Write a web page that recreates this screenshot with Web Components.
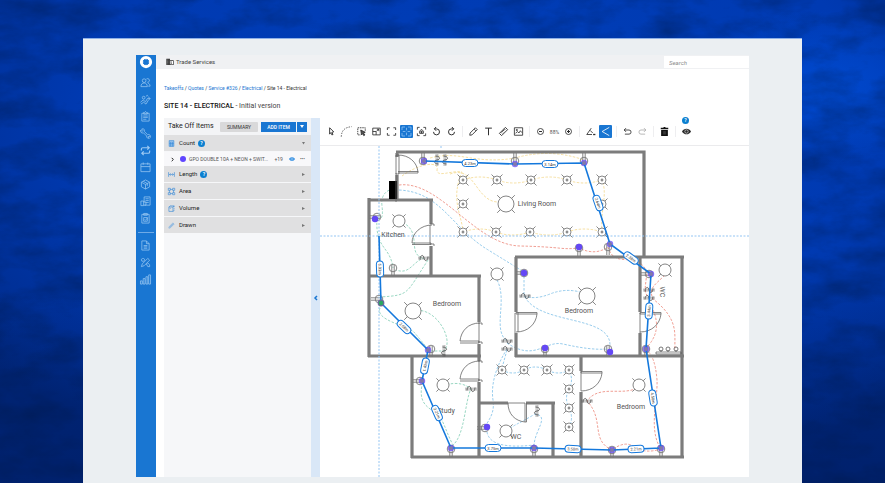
<!DOCTYPE html>
<html lang="en">
<head>
<meta charset="utf-8">
<title>Site 14 - Electrical</title>
<style>
body{margin:0;font-family:Roboto,"Liberation Sans",sans-serif;font-size:6px;line-height:8px;color:#333}
</style>
</head>
<body>
<page-backdrop>
  <app-shell>
    <side-nav slot="nav"></side-nav>
    <top-bar slot="top">Trade Services</top-bar>
    <page-heading slot="heading"></page-heading>
    <takeoff-panel slot="panel">
      <group-row icon="count" help open>Count</group-row>
      <item-row>GPO DOUBLE 10A + NEON + SWIT...</item-row>
      <group-row icon="length" help>Length</group-row>
      <group-row icon="area">Area</group-row>
      <group-row icon="volume">Volume</group-row>
      <group-row icon="drawn">Drawn</group-row>
    </takeoff-panel>
    <draw-toolbar slot="canvas"></draw-toolbar>
    <floor-plan slot="canvas"></floor-plan>
  </app-shell>
</page-backdrop>
<script>
const ICONS={
 logo:'<circle cx="12" cy="12" r="8" fill="none" stroke="#fff" stroke-width="5"/><path d="M12 4.500v3M12 16.500v3M4.500 12h3M16.500 12h3M7 7l1.500 1.500M17 17l-1.500-1.500M7 17l1.500-1.500M17 7l-1.500 1.500" stroke="#fff" stroke-width="2"/>',
 people:'<circle cx="9" cy="8" r="4"/><path d="M2 21c0-5 3-8 7-8s7 3 7 8zM14 4.500a4 4 0 1 1 2 7M17 13c3 1 5 4 5 7h-4"/>',
 trend:'<circle cx="8" cy="8" r="3"/><path d="M1 18l6-5 5 4 4-7 6 0M18 6l4 4-4 4M2 22l6-4 5 4 5-8M13 5l3-2 2 2"/>',
 clip:'<path d="M4 5h16v17H4zM8 5V3h2l2-2 2 2h2v4H8zM7 11h10M7 14h10M7 18h7"/>',
 wrench:'<path d="M9.500 3.500a4.500 4.500 0 0 0-6-1l3 3-2 2-3-3a4.500 4.500 0 0 0 6 6l7 7a4.500 4.500 0 0 0 6 5l-3-3 2-2 3 3a4.500 4.500 0 0 0-6-6l-7-7a4.500 4.500 0 0 0 0-4z"/>',
 loop:'<path d="M3 12V9a3 3 0 0 1 3-3h13M16 2l4 4-4 4M21 12v3a3 3 0 0 1-3 3H5M8 14l-4 4 4 4" stroke-width="2.600"/>',
 calendar:'<path d="M2 4h20v17H2zM2 10h20M7 1v5M17 1v5"/>',
 cube:'<path d="M12 2l9 5v10l-9 5-9-5V7zM3 7l9 5 9-5M12 12v10M7 5l9 5v5"/>',
 receipt:'<path d="M9 14V2h13v18H10M12 6h7M12 10h7M12 14h7M2 11h6v10H2zM8 13l5 0v7H8"/>',
 clip2:'<path d="M4 3h16v19H4zM8 1h8v4H8zM8 10h8v8H8zM10 14l2 2 5-6"/>',
 doc:'<path d="M4 2h10l6 6v14H4zM14 2v6h6M8 12h8M8 15h8M8 18h8"/>',
 pens:'<path d="M3 21l2-6L17 3l4 4L9 19zM3 5c3-3 7-2 7 1s-3 4-6 3zM14 15l3-2 4 4v4h-4z"/>',
 bars:'<path d="M1 15h4v7H1zM7 10h4v12H7zM13 6h4v16h-4zM19 2h4v20h-4z"/>',
 building:'<path d="M1 2h11v5h11v14H1z" fill="#333" stroke="none"/><path d="M4 6h2M8 6h2M4 10h2M8 10h2M4 14h2M8 14h2M4 18h2M8 18h2" stroke="#ddd" stroke-width="1.500"/><path d="M13 9h8v10h-8z" fill="#fff" stroke="none"/><path d="M15 12h3M15 16h3" stroke="#333"/>',
 count:'<path d="M4 2h16v20H4z" fill="#b7d7f5"/><path d="M4 7h16M4 12h16M4 17h16M9 7v15M15 7v15"/>',
 length:'<path d="M2 4v16M22 4v16M5 12h14M9 8l-4 4 4 4M15 8l4 4-4 4"/>',
 area:'<path d="M5 5h14v14H5z"/><path d="M1 1h7v7H1zM16 1h7v7h-7zM1 16h7v7H1zM16 16h7v7h-7z" fill="#e0e0e1"/>',
 volume:'<path d="M3 7h14v15H3zM3 7l4-4h14l-4 4M21 3v4M21 10v3M21 16v3l-4 3M6 12h3"/>',
 drawn:'<path d="M3 21l1-5L17 3l4 4L8 20zM7 17L17 7" stroke="#5c9fe0"/>',
 cursor:'<path d="M7 2l11 11-5 1 3 6-3 1-3-6-3 4z" stroke-width="2.400"/>',
 curve:'<path d="M-2 26C-1 8 8 1 26-1" stroke-width="1.800" stroke-dasharray="4 3"/>',
 pick:'<path d="M22 10V2H2v19h8" stroke-dasharray="4 2"/><path d="M10 8l12 6-5 2 4 5-3 2-3-5-3 3z" fill="#555"/>',
 scale:'<path d="M2 3h20v18H2zM2 12h9v9M12 11l6-5M13 6h5v5"/>',
 full:'<path d="M1 8V2h6M17 2h6v6M23 16v6h-6M7 22H1v-6"/>',
 grid:'<path d="M0 8V0h8M16 0h8v8M24 16v8h-8M8 24H0v-8M12 2v7M12 15v7M2 12h7M15 12h7" stroke="#a3d0fb" stroke-width="1.800"/>',
 focus:'<path d="M1 7V1h6M17 1h6v6M23 17v6h-6M7 23H1v-6"/><path d="M7 17v-6l5-5 5 5v6z"/><circle cx="12" cy="13" r="2" fill="#333"/>',
 ccw:'<path d="M4 13a8 8 0 1 0 8-8H7M11 0L6 5l5 5" stroke-width="2.600"/>',
 cw:'<path d="M20 13a8 8 0 1 1-8-8h5M13 0l5 5-5 5" stroke-width="2.600"/>',
 pencil:'<path d="M2 22l1-6L17 2l5 5L8 21zM14 6l4 4" stroke-width="2.300"/>',
 text:'<path d="M3 3h18M12 3v19" stroke-width="2.600"/>',
 ruler:'<path d="M1 17L17 1l6 6L7 23zM14 5l3 3M11 8l3 3M8 11l3 3M5 14l3 3" stroke-width="2.400"/>',
 image:'<path d="M1 2h22v20H1zM4 17l5-5 4 4 4-6 4 5M6 7h3v2H6z"/>',
 minus:'<circle cx="12" cy="12" r="8"/><path d="M8 12h8" stroke-width="2.800"/>',
 plus:'<circle cx="12" cy="12" r="8"/><path d="M8 12h8M12 8v8" stroke-width="2.800"/>',
 angle:'<path d="M14 3L2 20h14M11 9l7 7"/><path d="M19 20h6" stroke-width="3.500"/>',
 share:'<path d="M22 1L3 12l19 11" stroke="#fff"/>',
 undo:'<path d="M8 3L3 8l5 5M3 8h13a5.500 5.500 0 0 1 0 11H5" stroke-width="2.200"/>',
 redo:'<path d="M16 3l5 5-5 5M21 8H8a5.500 5.500 0 0 0 0 11h11" stroke="#aaa" stroke-width="2.200"/>',
 trash:'<path d="M2 2h7l1-2h4l1 2h7v4H2zM3 8h18v16H3z" fill="#111" stroke="none"/><path d="M9 11v9M12 11v9M15 11v9" stroke="#777" stroke-width="1"/>',
 eye:'<path d="M0 12c5-10 19-10 24 0-5 10-19 10-24 0z" fill="currentColor" stroke="none"/><circle cx="12" cy="12" r="4.500" fill="none" stroke="#fff" stroke-width="1.500"/>'
};
const svg=(n,w=2)=>`<svg viewBox="0 0 24 24" fill="none" stroke="currentColor" stroke-width="${w}" aria-hidden="true">${ICONS[n]}</svg>`;
const BTN='button{font:inherit;color:inherit;border:0;padding:0;margin:0;background:none;cursor:pointer}svg{display:block;flex:none;overflow:visible}';
const define=(name,render)=>customElements.define(name,class extends HTMLElement{
  constructor(){super();this.attachShadow({mode:'open'})}
  connectedCallback(){this.shadowRoot.innerHTML=render(this)}
});

define('page-backdrop',()=>`<style>
:host{display:grid;min-height:100vh;background:#0038ae}
.wall,.sheet{grid-area:1/1}
.wall{display:block;width:100%;height:100%;min-height:0;contain:size}
.sheet{margin:38px 83px 0;padding:16px 53px 6px;background:#ebeff2;border-top:1px solid #8fb0e6}
</style>
<svg class="wall" preserveAspectRatio="none" viewBox="0 0 885 483" aria-hidden="true">
<defs><radialGradient id="g" cx=".55" cy=".25" r=".75"><stop offset="0" stop-color="#003eb8"/><stop offset=".6" stop-color="#003ab2"/><stop offset=".85" stop-color="#003098"/><stop offset="1" stop-color="#00267a"/></radialGradient>
<radialGradient id="h" cx=".93" cy=".18" r=".16"><stop offset="0" stop-color="#0050dc" stop-opacity=".7"/><stop offset="1" stop-color="#0050dc" stop-opacity="0"/></radialGradient>
<linearGradient id="f" x1="0" y1="0" x2="0" y2="1"><stop offset=".6" stop-color="#001a5c" stop-opacity="0"/><stop offset="1" stop-color="#001a5c" stop-opacity=".45"/></linearGradient>
<filter id="n" x="0" y="0" width="1" height="1" color-interpolation-filters="sRGB"><feTurbulence type="fractalNoise" baseFrequency=".02 .04" numOctaves="6" seed="8"/><feColorMatrix values="0 0 0 0 0  0 0 0 0 .09  0 0 0 0 .27  .8 0 0 0 -.28"/></filter></defs>
<rect width="885" height="483" fill="url(#g)"/><rect width="885" height="483" fill="url(#h)"/><rect width="885" height="483" fill="url(#f)"/><rect width="885" height="483" filter="url(#n)"/></svg>
<div class="sheet"><slot></slot></div>`);

define('app-shell',()=>`<style>
:host{display:flex;background:#fff}
.main{flex:1;min-width:0;display:flex;flex-direction:column}
.work{display:flex;flex:1;padding-left:8px}
.canvas{flex:1;min-width:0}
${BTN}
.split{width:9px;display:flex;align-items:center;justify-content:center;background:#d9e7f7;color:#1976d2}
.split svg{width:6px;height:6px}
</style><slot name="nav"></slot><div class="main"><slot name="top"></slot><slot name="heading"></slot>
<div class="work"><slot name="panel"></slot><button class="split" aria-label="Collapse panel"><svg viewBox="0 0 6 6" fill="none" stroke="currentColor" stroke-width="1.500"><path d="M4 1L2 3l2 2"/></svg></button>
<div class="canvas"><slot name="canvas"></slot></div></div></div>`);

define('side-nav',()=>`<style>
:host{display:block;width:20px;background:#1976d2;color:#9cc9f3}
nav{display:flex;flex-direction:column;align-items:center}
${BTN}
a{display:flex;align-items:center;justify-content:center;width:20px;height:17px;color:inherit;padding-right:2px;box-sizing:border-box}
a svg{width:11px;height:11px}
.logo{height:14px;margin-bottom:5px;padding:0}.logo svg{width:14px;height:14px}
hr{width:16px;border:0;border-top:1px solid #6faae6;margin:5px 0 4px}
</style><nav aria-label="Main"><a href="#" class="logo" aria-label="Home">${svg('logo')}</a>
${['people','trend','clip','wrench','loop','calendar','cube','receipt','clip2'].map(n=>`<a href="#" aria-label="${n}">${svg(n,1.6)}</a>`).join('')}<hr>
${['doc','pens','bars'].map(n=>`<a href="#" aria-label="${n}">${svg(n,1.6)}</a>`).join('')}</nav>`);

define('top-bar',()=>`<style>
:host{display:flex;align-items:center;height:14px;background:#f0f1f3;padding-left:10px;gap:2px;color:#444}
svg{width:8px;height:8px}
input{margin-left:auto;width:85px;height:12px;box-sizing:border-box;border:0;padding:0 5px;font:italic 6px Roboto,sans-serif;background:#fff;outline:0}
input::placeholder{color:#8a8a8a;opacity:1}
</style>${svg('building')}<span><slot></slot></span><input type="search" placeholder="Search" aria-label="Search">`);

define('page-heading',()=>`<style>
:host{display:block;padding:15px 8px 7px}
nav{font-size:5px;line-height:8px;color:#333}
a{color:#1976d2;text-decoration:none}
h1{font-size:7px;line-height:10px;margin:9px 0 0;font-weight:400;color:#444}
b{font-weight:500;color:#111}
</style><nav aria-label="Breadcrumb"><a href="#">Takeoffs</a> / <a href="#">Quotes</a> / <a href="#">Service #326</a> / <a href="#">Electrical</a> / <span>Site 14 - Electrical</span></nav>
<h1><b>SITE 14 - ELECTRICAL</b> - Initial version</h1>`);

define('help-badge',()=>`<style>:host{display:inline-flex}button{all:unset;width:7px;height:7px;border-radius:4px;background:#0b7fd0;color:#fff;font-size:5px;line-height:7px;font-weight:700;text-align:center}</style><button aria-label="Help">?</button>`);

define('takeoff-panel',()=>`<style>
:host{display:block;width:147px;background:#f6f7f9}
${BTN}
header{display:flex;align-items:center;height:17px;padding:0 4px;background:#f3f4f6}
h2{font-size:7px;font-weight:400;margin:0 auto 0 0;color:#222;line-height:9px}
button{height:10px;font-size:5px;line-height:10px}
.s{width:38px;background:#d9d9da;margin-right:3px;border-radius:1px}
.a{width:35px;background:#1976d2;color:#fff;font-weight:500}
.d{width:10px;background:#1976d2;color:#fff;margin-left:1px;display:flex;align-items:center;justify-content:center}
.d svg{width:4px;height:3px}
</style><header><h2>Take Off Items</h2><button class="s">SUMMARY</button><button class="a">ADD ITEM</button><button class="d" aria-label="More ways to add"><svg viewBox="0 0 4 3"><path d="M0 0h4L2 3z" fill="#fff"/></svg></button></header><slot></slot>`);

define('group-row',e=>`<style>
:host{display:block;margin-bottom:1px}
${BTN}
div{display:flex;align-items:center;gap:3px;height:16px;padding:0 6px 0 4px;background:#e0e0e1;color:#222}
.g{display:flex;align-items:center;gap:4px}
.g svg{width:7px;height:7px;color:#2d83d6}
.t{margin-left:auto;color:#777}.t svg{width:3px;height:3px}
</style><div><button class="g" aria-expanded="${e.hasAttribute('open')}">${svg(e.getAttribute('icon'))}<span><slot></slot></span></button>${e.hasAttribute('help')?'<help-badge></help-badge>':''}<button class="t" aria-label="Toggle"><svg viewBox="0 0 3 3"><path d="${e.hasAttribute('open')?'M0 0h3L1.500 2.500z':'M0 0l3 1.500L0 3z'}" fill="currentColor"/></svg></button></div>`);

define('item-row',()=>`<style>
:host{display:flex;align-items:center;height:14px;padding:0 6px;color:#555;font-size:5px;background:#f8f8fa}
${BTN}
.c{width:4px;color:#222}.c svg{width:5px;height:5px}
i{width:6px;height:6px;border-radius:3px;background:#5f45ff;margin:0 3px 0 6px}
.n{margin-left:auto;margin-right:6px}
.e{color:#2d8be0;margin-right:5px}.e svg{width:6px;height:6px}
</style><button class="c" aria-label="Expand"><svg viewBox="0 0 6 6" fill="none" stroke="currentColor" stroke-width="1.200"><path d="M2 1l2 2-2 2"/></svg></button><i></i><span><slot></slot></span><span class="n">+19</span><button class="e" aria-label="Show">${svg('eye')}</button><button aria-label="More">•••</button>`);

define('tool-button',e=>`<style>
:host{display:flex;position:relative;width:15px;height:14px;align-items:center;justify-content:center;color:#2b2b2b}
${BTN}
button{display:flex;width:13px;height:13px;align-items:center;justify-content:center;border-radius:1px}
button.on{background:#1976d2}
svg{width:9px;height:9px}
help-badge{position:absolute;left:3px;top:-8px}
</style><button aria-label="${e.getAttribute('icon')}" class="${e.hasAttribute('on')?'on':''}">${svg(e.getAttribute('icon'),2.2)}</button>${e.hasAttribute('help')?'<help-badge></help-badge>':''}`);

const tb=(...a)=>a.map(n=>`<tool-button icon="${n}" ${n==='grid'||n==='share'?'on':''} ${n==='eye'?'help':''}></tool-button>`).join('');
define('draw-toolbar',()=>`<style>
:host{display:flex;align-items:center;height:27px;padding-left:4px;border-bottom:1px solid #ebebed}
u{width:1px;height:11px;margin:0 3px;background:#eeeef0}
span{width:13px;font-size:5px;color:#555;text-align:center}
</style>${tb('cursor','curve','pick','scale','full','grid','focus','ccw','cw')}<u></u>${tb('pencil','text','ruler','image')}<u></u>${tb('minus')}<span>88%</span>${tb('plus')}<u></u>${tb('angle','share')}<u></u>${tb('undo','redo')}<u></u>${tb('trash')}<u></u>${tb('eye')}`);

/* Plan geometry: one unit is one drawing unit of the sheet. */
const walls='M396 152H644V257 M397 153V157 M397 175V199 M369 198V357 M368 200H433 M431 200V224 M431 246V276 M368 276H481 M479 276V322 M479 344V361 M479 382V457 M368 356H481 M412 356V458 M411 457H684 M682 458V257 M515 257H684 M516 257V312 M516 333V357 M515 356H684 M640 257V312 M640 333V356 M581 356V371 M581 392V457 M479 403H508 M526 403H555 M553 403V457';
const down=[[463,180],[497,180],[531,180],[567,180],[602,180],[463,204],[602,204],[463,232],[496,232],[530,232],[567,232],[602,232],[502,370],[524,370],[547,370],[569,370],[569,389],[569,408],[569,427]];
const lamps=[[506,204,8],[399,221,6],[413,311,8],[587,296,8],[639,385,6],[665,270,6],[443,385,6],[506,431,6],[497,274,6]];
const outlets=[[423,161,180],[515,161,180],[584,161,180],[377,217,90],[393,268,0],[379,299,90],[431,349,0],[420,381,90],[451,449,0],[534,449,0],[612,450,0],[661,449,0],[646,349,0],[649,274,90],[608,247,0],[579,248,0],[524,273,90],[545,349,0],[608,349,0],[485,428,90]];
const dots=[[424,161],[515,164],[584,163],[375,219],[428,350],[422,381],[451,448],[534,448],[612,450],[661,448],[646,349],[651,274],[610,244],[579,247],[524,273],[545,348],[610,352],[487,427]];
const nodes=new Set(['424,161','515,164','584,163','428,350','422,381','451,448','534,448','612,450','661,448','646,349','651,274','610,244']);
const sw=[[437,160,90],[445,160,90],[424,258,0],[444,351,90],[471,389,0],[507,341,0],[507,349,0],[525,296,0],[649,290,0],[649,298,0],[587,401,0],[537,411,90]];
const pills=[[470,163,0,'4.23m'],[550,164,0,'3.14m'],[598,203,71,'2.64m'],[631,258,36,'2.38m'],[649,311,-86,'3.44m'],[653,398,81,'4.58m'],[636,449,-2,'2.21m'],[573,449,2,'3.58m'],[493,448,0,'3.75m'],[437,413,66,'3.21m'],[425,366,-79,'1.43m'],[404,327,44,'2.08m'],[380,269,88,'5.03m']];
const wires={
'#f5dc98':'M402 176C418 164 440 160 437 170C437 178 452 170 462 172C450 200 462 215 463 232Q480 226 496 232T530 232Q550 238 567 232T602 232M450 174C475 165 475 200 497 202M463 180Q480 174 497 180T531 180Q550 174 567 180T602 180C608 195 600 210 602 232M430 158C460 150 475 165 515 158Q550 148 584 160',
'#ee9488':'M399 185C440 180 475 245 520 246S560 250 579 248Q595 256 608 247C615 270 635 250 646 270C648 280 642 290 648 297M665 275C655 285 648 288 653 299C680 320 674 335 675 350M653 310Q662 330 648 346M640 386C625 398 600 383 587 401C605 420 590 440 612 450Q625 440 635 447T661 449C648 430 658 400 657 380Q655 355 646 350',
'#8cc6ea':'M399 190C440 192 450 225 485 248T524 272V296Q535 300 550 294T580 292M525 297C540 325 610 315 610 345M507 343C535 362 545 340 563 344S595 350 608 349M497 280C508 300 492 330 507 341M507 349C500 360 490 380 493 400S480 425 487 432Q490 450 534 445C535 430 550 416 535 414Q525 420 519 423T506 431M502 370Q513 376 524 370T547 370T569 370Q574 380 569 389Q564 398 569 408T569 427M507 350L502 368',
'#8fd2bc':'M397 188Q380 190 382 206T377 218C375 250 390 245 393 268M399 221C425 230 405 255 424 258C412 262 410 275 396 270M428 260C405 295 410 295 380 297M380 308C375 320 405 325 414 332T428 349M413 311C435 305 455 340 444 351H430M443 386C458 380 468 386 471 389C465 400 465 435 453 445C445 430 444 420 437 414S418 405 422 385'};
define('floor-plan',()=>`<style>
:host{display:block}svg{display:block;width:100%;height:auto}
text{font-family:Roboto,sans-serif;text-anchor:middle}
.r{font-size:7px;fill:#555}.p{font-size:4px;fill:#333}
</style><svg viewBox="320 146 429 331" role="img" aria-label="Electrical floor plan" fill="none">
<defs><g id="dn" stroke="#6a6a6a" stroke-width=".8"><path d="M-5.500-5.500l2.800 2.800M5.500-5.500l-2.800 2.800M-5.500 5.500l2.800-2.800M5.500 5.500l-2.800-2.800"/><circle r="4" fill="#fff"/><path d="M-.8-1h1.600v2h-1.600z" fill="#888" stroke="#888"/></g>
<g id="out" stroke="#777" stroke-width=".9"><circle r="3.800"/><path d="M-1.200-3V8M1.200-3V8"/></g>
<g id="sw" stroke="#555"><path d="M-6-.8h12M-6 .9H6" stroke-width=".5"/><path d="M-4 1.500C-4-3-.5-4 0 0S4 3 4-1.500" stroke-width=".9"/></g></defs>
${Object.entries(wires).map(([c,d])=>`<path d="${d}" stroke="${c}" stroke-width=".9" stroke-dasharray="2.500 1.500"/>`).join('')}
<path d="${walls}" stroke="#7c7c7c" stroke-width="3.200"/>
<path d="M389 181h8v18h-8z" fill="#000"/>
<g stroke="#666" stroke-width=".8"><path d="M396 155h3v19h-3zM398 173h20v-1.500h-20M398 155c11 0 19 7 20 17M396 173v29"/>
<path d="M432 225c-11 0-20 8-20 18h19v1.500h-19M430 224h4v2M430 244h4v2M430 225v19"/>
<path d="M480 323c-12 0-19 8-20 18h19v2h-19M478 323h4v2M478 342h4v2M479 323v20"/>
<path d="M480 361c-12 0-19 8-20 18h19v2h-19M478 361h4v2M478 380h4v2M479 361v20"/>
<path d="M516 332c12 0 20-8 21-18h-21v-1.500h21v1.500M515 313v20M518 312v20"/>
<path d="M640 332c12 0 20-8 21-18h-21v-1.500h21v1.500M640 313v20"/>
<path d="M581 391c12 0 20-8 21-18h-21v-1.500h21v1.500M581 371v20"/>
<path d="M508 403c0 11 7 18 17 19v-19h-17M525 422h1.500v-19"/></g>
<path d="M656 354h25v-2h-25zM661 352v-2M668 352v-2M676 352v-2" stroke="#555" stroke-width=".7"/><g stroke="#555" stroke-width=".8"><circle cx="661" cy="349" r="2"/><circle cx="668" cy="349" r="2"/><circle cx="676" cy="349" r="2"/></g>
${down.map(([x,y])=>`<use href="#dn" x="${x}" y="${y}"/>`).join('')}
${lamps.map(([x,y,r])=>{const a=r*.7,b=r*1.1;return `<g transform="translate(${x} ${y})" stroke="#666" stroke-width=".8"><circle r="${r}" fill="#fff"/><path d="M${a} ${a}L${b} ${b}M-${a} ${a}L-${b} ${b}M${a}-${a}L${b}-${b}M-${a}-${a}L-${b}-${b}"/></g>`}).join('')}
${outlets.map(([x,y,r])=>`<use href="#out" transform="translate(${x} ${y}) rotate(${r})"/>`).join('')}
${sw.map(([x,y,r])=>`<use href="#sw" transform="translate(${x} ${y}) rotate(${r})"/>`).join('')}
<path d="M379 146V477M320 236H749M441 146v2" stroke="#94c5f3" stroke-width="1" stroke-dasharray="2 1.500"/>
<g class="r"><text x="537" y="206">Living Room</text><text x="393" y="237">Kitchen</text><text x="447" y="306">Bedroom</text><text x="579" y="313">Bedroom</text><text x="631" y="409">Bedroom</text><text x="446" y="413">Study</text><text x="516" y="439">WC</text><text transform="translate(660 292) rotate(90)">WC</text></g>
${dots.map(([x,y])=>`<circle cx="${x}" cy="${y}" r="3.200" fill="#6448f5" ${nodes.has(x+','+y)?'opacity=".75"':''}/>`).join('')}
<path d="M379 236L381 303L428 350L422 381L451 448L534 448L612 450L661 448L646 349L651 274L610 244L584 163L515 164L424 161" stroke="#1478dc" stroke-width="1.600"/>
${[...nodes].map(s=>{const[x,y]=s.split(',');return `<circle cx="${x}" cy="${y}" r="2" fill="#8379a8"/>`}).join('')}
<circle cx="381" cy="303" r="3.400" fill="#6a6a9a"/><circle cx="381" cy="303" r="2.200" fill="#2aa860"/>
${pills.map(([x,y,r,t])=>`<g transform="translate(${x} ${y}) rotate(${r})"><rect x="-8" y="-3.500" width="16" height="7" rx="3.500" fill="#fff" stroke="#1478dc" stroke-width="1"/><text class="p" y="1.500">${t}</text></g>`).join('')}
</svg>`);
</script>
</body>
</html>
